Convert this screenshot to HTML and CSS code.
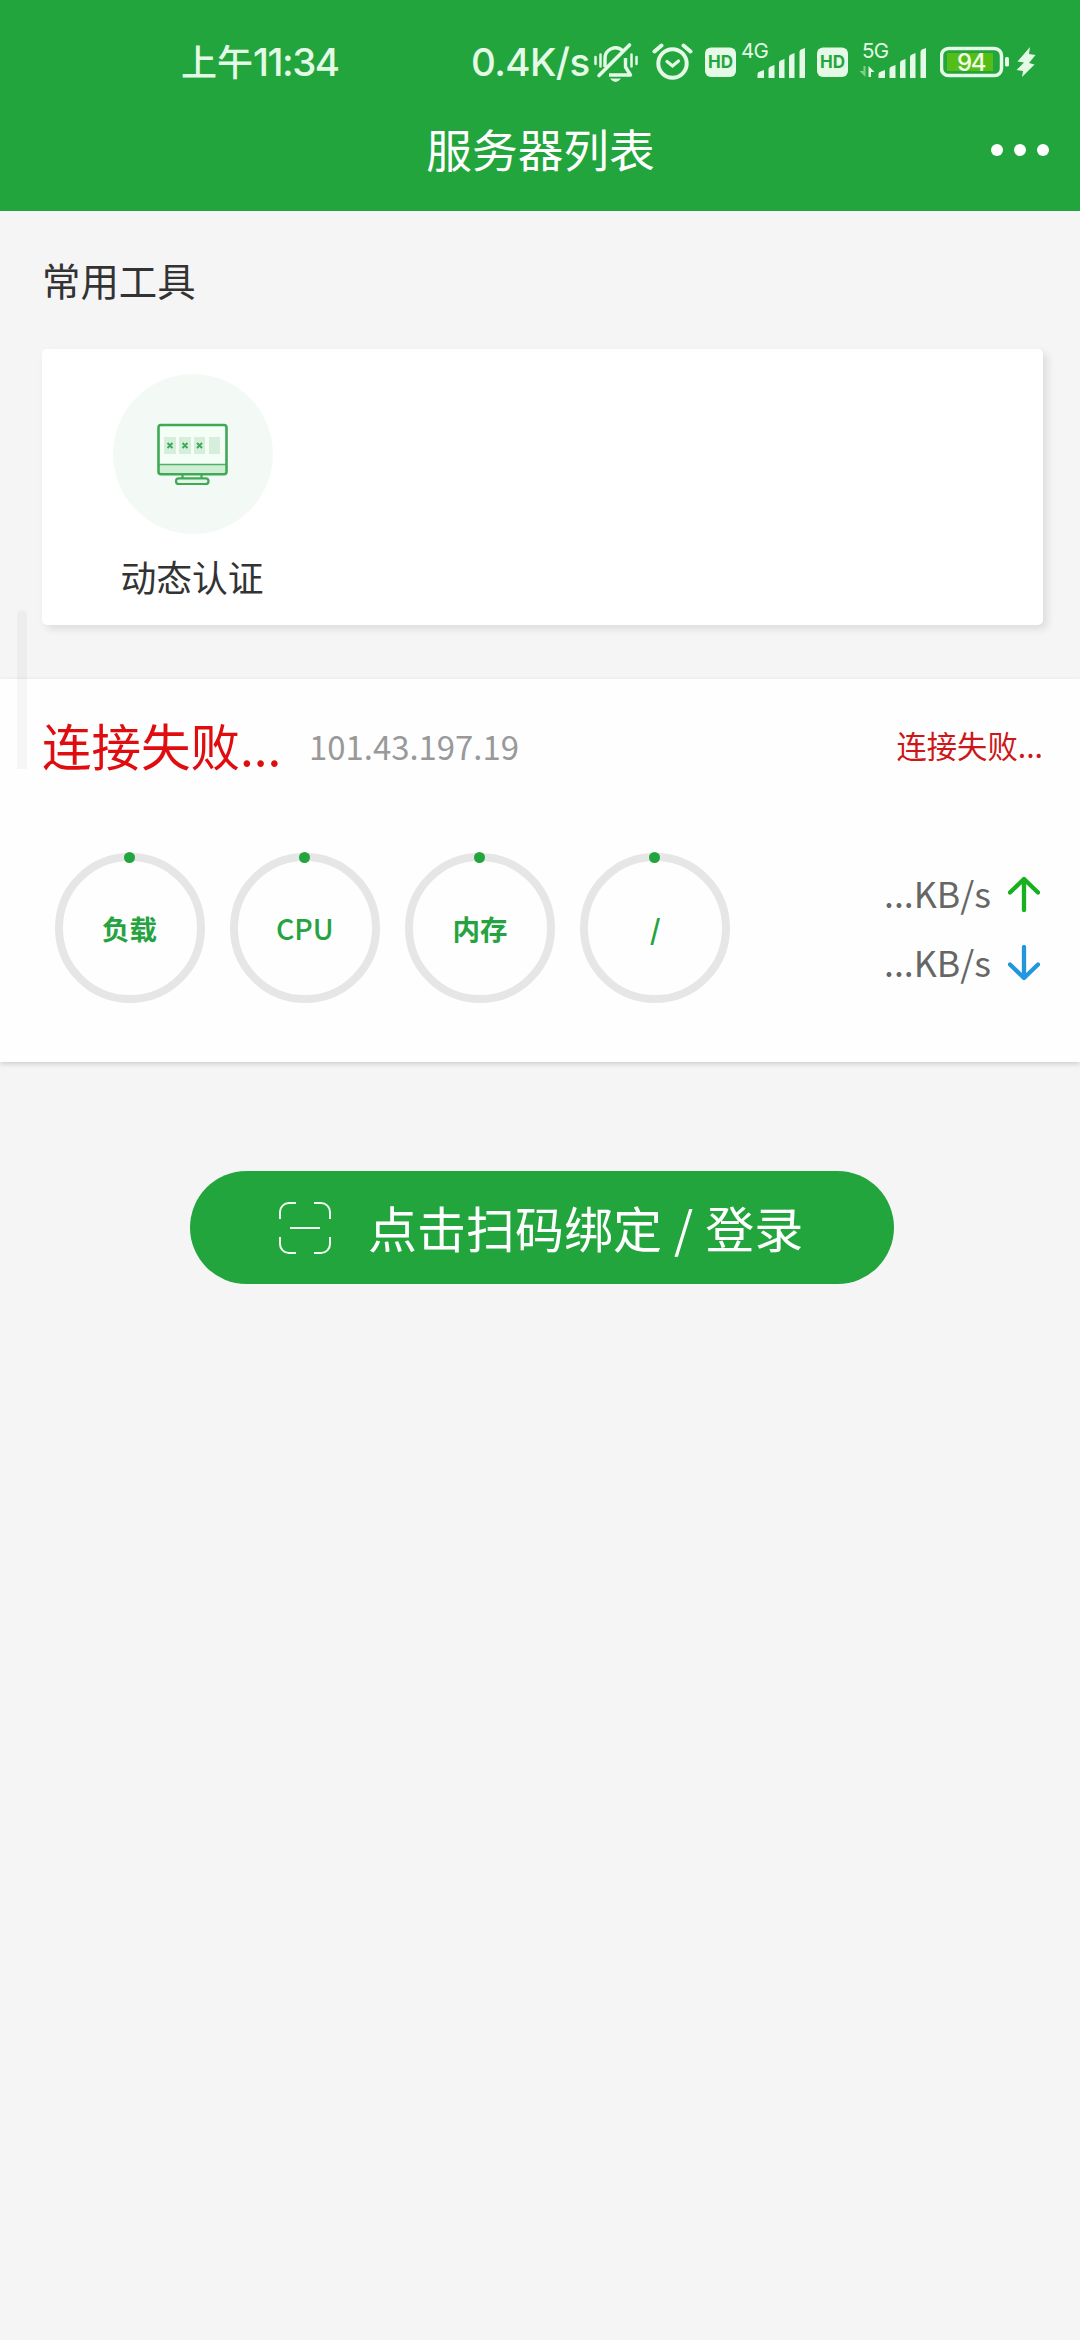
FILE: index.html
```html
<!DOCTYPE html>
<html lang="zh-CN">
<head>
<meta charset="utf-8">
<title>服务器列表</title>
<link rel="stylesheet" href="styles.css">
</head>
<body>
<header class="header">
  <div class="status">
    <span class="clock"><span class="period">上午</span>11:34</span>
    <span class="speed">0.4K/s</span>
    <div class="tray">
      <svg class="tray-icon" width="44" height="60" viewBox="594 30 44 60">
        <path d="M605 67V59a10.500 10.500 0 0 1 18-8M625.500 58v9l5 8H609" fill="none" stroke="#e4fae6" stroke-width="3.400" stroke-linejoin="round"/>
        <path d="M599 75.500L629.500 45" stroke="#e4fae6" stroke-width="3.600" stroke-linecap="round"/>
        <path d="M610 78.500h11q-5.500 7-11 0z" fill="#e4fae6"/>
        <path d="M595.500 57v7M600.500 54.500v12M631.500 54.500v12M636.500 57v7" stroke="#e4fae6" stroke-width="2.500" stroke-linecap="round"/>
      </svg>
      <svg class="tray-icon alarm" width="42" height="60" viewBox="652 30 42 60">
        <circle cx="672.500" cy="63.500" r="14.200" fill="none" stroke="#e4fae6" stroke-width="4"/>
        <path d="M654.500 51.500l7-6M690.500 51.500l-7-6" stroke="#e4fae6" stroke-width="4" stroke-linecap="round"/>
        <path d="M667 61.500l5.500 4.500 6-5" fill="none" stroke="#e4fae6" stroke-width="3.200" stroke-linecap="round"/>
      </svg>
      <svg class="tray-icon hd" width="32" height="60" viewBox="705 30 32 60">
        <rect x="705" y="47.500" width="31" height="29.500" rx="6" fill="#e4fae6"/>
        <text class="hd-text" x="720.500" y="68" text-anchor="middle">HD</text>
      </svg>
      <svg class="tray-icon signal-a" width="65" height="60" viewBox="741 30 65 60">
        <text class="net-text" x="741" y="58">4G</text>
        <path d="M757.500 78v-4q0-2 2.500-2.500l4-1.500v8zM768.500 78v-9q0-2 2-2.500l4-1.500v13zM779 78v-15q0-2 1.500-2.500l4-1.500v19zM789 78v-21q0-2 2-2.500l3.500-1.500v25zM799.500 78v-26q0-2 1.500-2.500l4-1.500v30z" fill="#e4fae6"/>
      </svg>
      <svg class="tray-icon hd2" width="32" height="60" viewBox="705 30 32 60">
        <rect x="705" y="47.500" width="31" height="29.500" rx="6" fill="#e4fae6"/>
        <text class="hd-text" x="720.500" y="68" text-anchor="middle">HD</text>
      </svg>
      <svg class="tray-icon signal-b" width="68" height="60" viewBox="859 30 68 60">
        <text class="net-text" x="862" y="58">5G</text>
        <path d="M865.500 66v11l-6-6h4v-5z" fill="#7fd08c"/>
        <path d="M868.500 77v-11l6 6h-3.500v5z" fill="#e4fae6"/>
        <path d="M878.500 78v-4q0-2 2.500-2.500l4-1.500v8zM889.500 78v-9q0-2 2-2.500l4-1.500v13zM900 78v-15q0-2 1.500-2.500l4-1.500v19zM910 78v-21q0-2 2-2.500l3.500-1.500v25zM920.500 78v-26q0-2 1.500-2.500l4-1.500v30z" fill="#e4fae6"/>
      </svg>
      <svg class="tray-icon battery" width="70" height="60" viewBox="940 30 70 60">
        <rect x="941.500" y="48.500" width="60" height="27" rx="7" fill="none" stroke="#e4fae6" stroke-width="3.500"/>
        <rect x="947" y="53" width="46" height="18" fill="#55bd17"/>
        <rect x="1005" y="57" width="4" height="9.500" rx="1.500" fill="#e4fae6"/>
        <text class="battery-text" x="971" y="70.500" text-anchor="middle">94</text>
      </svg>
      <svg class="tray-icon bolt" width="20" height="60" viewBox="1015 30 20 60">
        <path d="M1029 47l-12.500 14.500 6.500 1-7.500 7.500 6.500 1-1 6 12.500-12.500-5.500-1.500 6.500-8-6.500-1z" fill="#e4fae6"/>
      </svg>
    </div>
  </div>
  <div class="titlebar">
    <h1 class="title">服务器列表</h1>
    <span class="more"><i class="more-dot"></i><i class="more-dot"></i><i class="more-dot"></i></span>
  </div>
</header>

<main>
  <section class="tools">
    <h2 class="tools-title">常用工具</h2>
    <div class="tools-card">
      <div class="tool">
        <div class="tool-icon">
          <svg width="72" height="64" viewBox="157 422 72 64">
            <rect x="158" y="425" width="68" height="49" rx="2" fill="#f4fdf6"/>
            <path d="M158.500 465h67v9h-67z" fill="#cdeed3"/>
            <path d="M164 437h12v17h-12zM179 437h12v17h-12zM194 437h11v17h-11zM209 437h11v17h-11z" fill="#d5efdc"/>
            <path d="M167.500 443l5 5m0-5l-5 5M182.500 443l5 5m0-5l-5 5M197 443l5 5m0-5l-5 5" stroke="#42a857" stroke-width="2"/>
            <path d="M159 464.500h67" stroke="#4eb463" stroke-width="1.700"/>
            <rect x="158.500" y="425" width="68" height="49.300" rx="2.500" fill="none" stroke="#3fa956" stroke-width="2.600"/>
            <path d="M182.500 474.500v4M201.500 474.500v4" stroke="#3fa956" stroke-width="2.200"/>
            <rect x="176" y="478.300" width="32.500" height="5.700" rx="2.800" fill="#e3f5e7" stroke="#3fa956" stroke-width="2.200"/>
          </svg>
        </div>
        <span class="tool-name">动态认证</span>
      </div>
    </div>
  </section>

  <section class="server">
    <div class="server-head">
      <span class="server-name">连接失败...</span>
      <span class="server-ip">101.43.197.19</span>
      <span class="server-state">连接失败...</span>
    </div>
    <div class="server-body">
      <div class="gauges">
        <div class="gauge">负载</div>
        <div class="gauge gauge-latin">CPU</div>
        <div class="gauge">内存</div>
        <div class="gauge">/</div>
      </div>
      <div class="traffic">
        <div class="rate"><span class="rate-text">...KB/s</span>
          <svg width="32" height="36" viewBox="0 0 32 36"><path d="M16 34V3M2 16.500L16 3l14 13.500" fill="none" stroke="#17b11d" stroke-width="4.300" stroke-linecap="round" stroke-linejoin="round"/></svg>
        </div>
        <div class="rate"><span class="rate-text">...KB/s</span>
          <svg width="32" height="36" viewBox="0 0 32 36"><path d="M16 2v31M2 19.500L16 33l14-13.500" fill="none" stroke="#2497dc" stroke-width="4.300" stroke-linecap="round" stroke-linejoin="round"/></svg>
        </div>
      </div>
    </div>
  </section>

  <button class="scan" type="button">
    <svg width="54" height="54" viewBox="0 0 54 54"><path d="M2 18V11a9 9 0 0 1 9-9h7M36 2h7a9 9 0 0 1 9 9v7M52 36v7a9 9 0 0 1-9 9h-7M18 52h-7a9 9 0 0 1-9-9v-7M12 27h30" fill="none" stroke="#f0fff2" stroke-width="2"/></svg>
    <span class="scan-text">点击扫码绑定 / 登录</span>
  </button>
</main>
<div class="edge-handle"></div>
</body>
</html>
```
FILE: styles.css
```css
* { box-sizing: border-box; }
body {
  margin: 0;
  height: 2340px;
  overflow: hidden;
  position: relative;
  background: #f6f5f6;
  color: #333;
  font-family: "Noto Sans CJK SC", sans-serif;
}
h1, h2 { margin: 0; font-weight: 400; }
svg { display: block; flex: none; }

.header { height: 211px; background: #22a53c; }
.status {
  height: 92px;
  padding: 32px 0 0 181px;
  display: flex;
  color: #e4fae6;
  font-family: Inter, "Noto Sans CJK SC", sans-serif;
  font-size: 38.500px;
  font-weight: 500;
  line-height: 60px;
  white-space: nowrap;
}
.clock { width: 290px; height: 60px; letter-spacing: -1.500px; }
.period { font-size: 36px; line-height: 1; letter-spacing: 0; }
.speed { width: 123px; letter-spacing: -0.600px; }
.tray { display: flex; margin-top: -2px; }
.alarm { margin-left: 14px; }
.hd { margin-left: 11px; }
.signal-a { margin-left: 4px; }
.hd2 { margin-left: 11px; }
.signal-b { margin-left: 10px; }
.battery { margin-left: 13px; }
.bolt { margin-left: 6px; }
.hd-text { font: 700 17px Inter, sans-serif; fill: #22a53c; }
.net-text { font: 400 20.500px Inter, sans-serif; fill: #e4fae6; letter-spacing: -0.800px; }
.battery-text { font: 500 24px Inter, sans-serif; fill: #f2ffe9; letter-spacing: -1.500px; }

.titlebar {
  height: 119px;
  display: grid;
  grid-template-columns: 1fr auto 1fr;
  align-items: center;
  padding-right: 31px;
  padding-left: 32px;
}
.title { grid-column: 2; font-size: 45.700px; line-height: 60px; color: #fff; margin-top: -7px; }
.more { justify-self: end; display: flex; gap: 11px; margin-top: -3px; }
.more-dot { width: 12px; height: 12px; border-radius: 50%; background: #fff; }

.tools { padding: 39px 37px 0 42px; height: 468px; }
.tools-title { font-size: 38.400px; line-height: 58px; height: 99px; }
.tools-card {
  height: 276px;
  border-radius: 5px;
  background: #fff;
  box-shadow: 4px 4px 8px rgba(0, 0, 0, 0.1);
  padding: 25px 0 0 71px;
}
.tool { width: 160px; display: flex; flex-direction: column; align-items: center; }
.tool-icon {
  width: 160px;
  height: 160px;
  border-radius: 50%;
  background: #f3faf6;
  display: flex;
  justify-content: center;
  align-items: center;
}
.tool-name { font-size: 35.800px; line-height: 54px; margin-top: 15px; margin-left: -2px; }

.server {
  height: 383px;
  background: #fefefe;
  box-shadow: 0 2px 5px rgba(0, 0, 0, 0.16);
}
.server-head { display: flex; align-items: center; padding: 28px 37px 0 42px; height: 104px; }
.server-name { font-size: 49.500px; color: #e00d10; width: 267px; margin-top: -1px; }
.server-ip { font-size: 32.900px; color: #999; }
.server-state { margin-left: auto; font-size: 30.300px; color: #cd1719; }
.server-body { display: flex; justify-content: space-between; padding: 70px 40px 0 54.500px; }
.gauges { display: flex; gap: 25.300px; }
.gauge {
  position: relative;
  width: 150px;
  height: 150px;
  border: 8.500px solid #e6e6e6;
  border-radius: 50%;
  display: flex;
  align-items: center;
  justify-content: center;
  color: #26a341;
  font-size: 27.500px;
  font-weight: 700;
  padding-bottom: 1px;
}
.gauge-latin { font-size: 28.500px; font-weight: 500; }
.gauge::before {
  content: "";
  position: absolute;
  left: 61px;
  top: -9px;
  width: 11px;
  height: 11px;
  border-radius: 50%;
  background: #22a53c;
}
.traffic { display: flex; flex-direction: column; padding-top: 6px; }
.rate { display: flex; align-items: center; gap: 17px; height: 69px; color: #666; }
.rate-text { font-size: 35.700px; margin-top: -3px; }

.scan {
  margin: 109px 0 0 190px;
  width: 704px;
  height: 113px;
  padding: 0 0 0 88px;
  border: 0;
  border-radius: 57px;
  background: #22a53c;
  color: #fff;
  display: flex;
  align-items: center;
  gap: 36px;
  font-family: inherit;
}
.scan-text { font-size: 49px; line-height: 70px; white-space: nowrap; word-spacing: 1px; margin-top: -1px; }
.edge-handle {
  position: absolute;
  left: 17px;
  top: 610px;
  width: 10px;
  height: 159px;
  border-radius: 5px 5px 0 0;
  background: rgba(0, 0, 0, 0.03);
}
```
